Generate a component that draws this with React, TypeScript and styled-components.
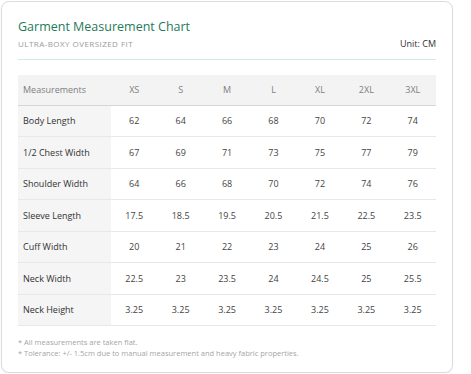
import React from "react";
import styled, { createGlobalStyle } from "styled-components";

const GlobalStyle = createGlobalStyle`
  body {
    margin: 0;
    background: #ffffff;
    font-family: "Open Sans", "Noto Sans", sans-serif;
  }
`;

const Card = styled.div`
  box-sizing: border-box;
  width: 452px;
  height: 372px;
  margin: 1px 0 0 1px;
  padding: 16px 16px 0 16px;
  border: 1px solid #dcdcdc;
  border-radius: 8px;
  background: #fff;
  box-shadow: 0 1px 2px rgba(0, 0, 0, 0.06);
`;

const Header = styled.header`
  display: flex;
  align-items: flex-end;
  justify-content: space-between;
  padding-bottom: 9px;
  border-bottom: 1px solid #cdeee3;
`;

const Headline = styled.div`
  display: grid;
  gap: 3px;
`;

const Title = styled.h1`
  margin: 0;
  font-size: 12.5px;
  font-weight: 400;
  line-height: 17px;
  color: #1f7a58;
`;

const Subtitle = styled.p`
  margin: 0;
  font-size: 8px;
  line-height: 12px;
  letter-spacing: 0.45px;
  text-transform: uppercase;
  color: #9a9a9a;
`;

const Unit = styled.span`
  font-size: 9px;
  line-height: 12px;
  color: #333;
`;

const Table = styled.table`
  width: 100%;
  margin-top: 15px;
  border-collapse: collapse;
  table-layout: fixed;
  font-size: 9px;
`;

const HeadCell = styled.th<{ $first?: boolean }>`
  height: 30px;
  padding: 0 0 0 ${(p) => (p.$first ? "5px" : "0")};
  box-sizing: border-box;
  background: #f3f3f3;
  border-bottom: 1px solid #d6d6d6;
  font-weight: 400;
  color: #808080;
  text-align: ${(p) => (p.$first ? "left" : "center")};
`;

const Row = styled.tr`
  height: 31.5px;
  border-bottom: 1px solid #e8e8e8;
`;

const LabelCell = styled.td`
  padding-left: 5px;
  background: #f5f5f5;
  color: #333;
`;

const ValueCell = styled.td`
  text-align: center;
  color: #444;
`;

const Notes = styled.div`
  margin-top: 11px;
  display: grid;
  font-size: 7.5px;
  line-height: 11px;
  color: #a5a5a5;
`;

const sizes = ["XS", "S", "M", "L", "XL", "2XL", "3XL"];

const rows: [string, (string | number)[]][] = [
  ["Body Length", [62, 64, 66, 68, 70, 72, 74]],
  ["1/2 Chest Width", [67, 69, 71, 73, 75, 77, 79]],
  ["Shoulder Width", [64, 66, 68, 70, 72, 74, 76]],
  ["Sleeve Length", ["17.5", "18.5", "19.5", "20.5", "21.5", "22.5", "23.5"]],
  ["Cuff Width", [20, 21, 22, 23, 24, 25, 26]],
  ["Neck Width", ["22.5", 23, "23.5", 24, "24.5", 25, "25.5"]],
  ["Neck Height", ["3.25", "3.25", "3.25", "3.25", "3.25", "3.25", "3.25"]],
];

export default function App() {
  return (
    <>
      <GlobalStyle />
      <Card>
        <Header>
          <Headline>
            <Title>Garment Measurement Chart</Title>
            <Subtitle>Ultra-Boxy Oversized Fit</Subtitle>
          </Headline>
          <Unit>Unit: CM</Unit>
        </Header>

        <Table>
          <colgroup>
            <col style={{ width: 93 }} />
          </colgroup>
          <thead>
            <tr>
              <HeadCell $first>Measurements</HeadCell>
              {sizes.map((s) => (
                <HeadCell key={s}>{s}</HeadCell>
              ))}
            </tr>
          </thead>
          <tbody>
            {rows.map(([label, values]) => (
              <Row key={label}>
                <LabelCell>{label}</LabelCell>
                {values.map((v, i) => (
                  <ValueCell key={i}>{v}</ValueCell>
                ))}
              </Row>
            ))}
          </tbody>
        </Table>

        <Notes>
          <span>* All measurements are taken flat.</span>
          <span>* Tolerance: +/- 1.5cm due to manual measurement and heavy fabric properties.</span>
        </Notes>
      </Card>
    </>
  );
}
